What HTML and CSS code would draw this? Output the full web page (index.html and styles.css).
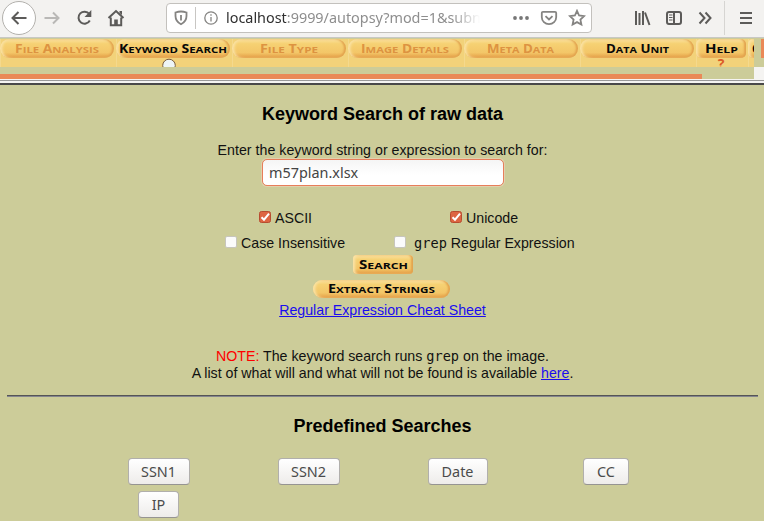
FILE: index.html
```
<!DOCTYPE html>
<html lang="en">
<head>
<meta charset="utf-8">
<title>Autopsy</title>
<link rel="stylesheet" href="styles.css">
</head>
<body>
<header class="toolbar">
  <span class="back"><svg width="18" height="18" viewBox="0 0 18 18"><path d="M16.500 9H2.500M8.500 3L2.500 9l6 6"/></svg></span>
  <svg class="forward" width="18" height="18" viewBox="0 0 18 18"><path d="M1.500 9h14M10 3.500l5.500 5.500-5.500 5.500"/></svg>
  <svg class="reload" width="18" height="18" viewBox="0 0 18 18"><path d="M14.300 5A6 6 0 1 0 14.800 11.500"/><path class="solid" d="M16.300 1v7H9.500z"/></svg>
  <svg class="home" width="18" height="18" viewBox="0 0 18 18"><path d="M1.500 9L9 2l7.500 7M3.800 8.500v7.700h10.400V8.500"/><path class="solid" d="M7.200 16v-5.500h3.600V16zM12.500 2H15v4l-2.500-2z"/></svg>
  <div class="address">
    <svg class="shield" width="14" height="16" viewBox="0 0 14 16"><path d="M1.500 2.500Q7 .5 12.500 2.500V6c0 4-2 6.500-5.500 8.300C3.500 12.500 1.500 10 1.500 6z"/><path d="M7 5v5.500"/></svg>
    <span class="divider"></span>
    <svg class="info" width="16" height="16" viewBox="0 0 16 16"><circle cx="8" cy="8" r="6.200"/><path d="M8 7v4.500M8 4.300v1.400"/></svg>
    <span class="url"><b>localhost</b>:9999/autopsy?mod=1&amp;subn</span>
    <svg class="dots" width="18" height="16" viewBox="0 0 18 16"><circle cx="3" cy="8" r="1.900"/><circle cx="9" cy="8" r="1.900"/><circle cx="15" cy="8" r="1.900"/></svg>
    <svg class="pocket" width="18" height="16" viewBox="0 0 18 16"><path d="M3 1.800h12q1.200 0 1.200 1.200v4.200a7.200 7 0 0 1-14.400 0V3Q1.800 1.800 3 1.800zM5.500 6.200L9 9.500l3.500-3.300"/></svg>
    <svg class="star" width="18" height="18" viewBox="0 0 18 18"><path d="M9 1.800l2.100 4.700 5 .6-3.700 3.500 1 5L9 13.100l-4.400 2.500 1-5L1.900 7.100l5-.6z"/></svg>
  </div>
  <svg class="library" width="17" height="16" viewBox="0 0 17 16"><path d="M2 1v14M5.500 3v12M9 1v14M11 2.500L15.500 15"/></svg>
  <svg class="sidebar" width="18" height="16" viewBox="0 0 18 16"><rect x="2" y="2" width="14" height="12" rx="2"/><path d="M9 2v12"/><path class="thin" d="M4 5h3.500M4 7.500h3.500M4 10h3.500"/></svg>
  <svg class="more" width="16" height="16" viewBox="0 0 16 16"><path d="M2.500 2.500L7.500 8l-5 5.500M8.500 2.500L13.500 8l-5 5.500"/></svg>
  <span class="rule"></span>
  <svg class="menu" width="14" height="16" viewBox="0 0 14 16"><path d="M1 3h12M1 8h12M1 13h12"/></svg>
</header>

<div class="frame">
  <nav class="tabs">
    <div class="tab off"><svg class="pill" width="114" height="19"><text x="15" y="13.500" textLength="84" lengthAdjust="spacingAndGlyphs">F<tspan>ILE</tspan> A<tspan>NALYSIS</tspan></text></svg></div>
    <div class="tab"><svg class="pill" width="114" height="19"><text x="3" y="13.500" textLength="108" lengthAdjust="spacingAndGlyphs">K<tspan>EYWORD</tspan> S<tspan>EARCH</tspan></text></svg><svg class="lens" width="16" height="9" viewBox="0 0 16 9"><circle cx="8" cy="7.500" r="6.300"/></svg></div>
    <div class="tab off"><svg class="pill" width="114" height="19"><text x="28" y="13.500" textLength="58" lengthAdjust="spacingAndGlyphs">F<tspan>ILE</tspan> T<tspan>YPE</tspan></text></svg></div>
    <div class="tab off"><svg class="pill" width="114" height="19"><text x="13" y="13.500" textLength="88" lengthAdjust="spacingAndGlyphs">I<tspan>MAGE</tspan> D<tspan>ETAILS</tspan></text></svg></div>
    <div class="tab off"><svg class="pill" width="114" height="19"><text x="23" y="13.500" textLength="67" lengthAdjust="spacingAndGlyphs">M<tspan>ETA</tspan> D<tspan>ATA</tspan></text></svg></div>
    <div class="tab"><svg class="pill" width="114" height="19"><text x="26" y="13.500" textLength="63" lengthAdjust="spacingAndGlyphs">D<tspan>ATA</tspan> U<tspan>NIT</tspan></text></svg></div>
    <div class="tab help"><svg class="pill" width="50" height="19"><text x="9" y="13.500" textLength="33" lengthAdjust="spacingAndGlyphs">H<tspan>ELP</tspan></text></svg><span class="question">?</span></div>
    <div class="tab close"><svg class="pill" width="50" height="19"><text x="4" y="13.500">C<tspan>LOSE</tspan></text></svg></div>
  </nav>
  <div class="vscroll"><span></span></div>
</div>
<div class="hscroll"><span class="track"><span class="thumb"></span></span></div>
<div class="split"></div>

<main>
  <h1 class="t-title">Keyword Search of raw data</h1>
  <p class="prompt">Enter the keyword string or expression to search for:</p>
  <div class="field">m57plan.xlsx</div>
  <div class="checks first">
    <label><svg class="box on" width="14" height="14" viewBox="0 0 14 14"><rect x="1.500" y="1.500" width="11" height="11" rx="2"/><path d="M3.500 7.200l2.500 2.500 5-6"/></svg>ASCII</label>
    <label><svg class="box on" width="14" height="14" viewBox="0 0 14 14"><rect x="1.500" y="1.500" width="11" height="11" rx="2"/><path d="M3.500 7.200l2.500 2.500 5-6"/></svg>Unicode</label>
  </div>
  <div class="checks second">
    <label><span class="box"></span>Case Insensitive</label>
    <label><span class="box"></span><span><code>grep</code> Regular Expression</span></label>
  </div>
  <svg class="pill search" width="60" height="19"><text x="6" y="13.500" textLength="49" lengthAdjust="spacingAndGlyphs">S<tspan>EARCH</tspan></text></svg>
  <svg class="pill extract" width="137" height="18"><text x="15" y="13" textLength="107" lengthAdjust="spacingAndGlyphs">E<tspan>XTRACT</tspan> S<tspan>TRINGS</tspan></text></svg>
  <p class="cheat"><a>Regular Expression Cheat Sheet</a></p>
  <p class="note"><em>NOTE:</em> The keyword search runs <code>grep</code> on the image.</p>
  <p class="list">A list of what will and what will not be found is available <a>here</a>.</p>
  <hr>
  <h1 class="t-pre">Predefined Searches</h1>
  <div class="grid">
    <button class="w62">SSN1</button><button class="w62">SSN2</button><button class="w59">Date</button><button class="w45">CC</button>
    <button class="w40">IP</button>
  </div>
</main>
</body>
</html>
```
FILE: styles.css
```
* { box-sizing: border-box; }
body { margin: 0; width: 764px; height: 521px; overflow: hidden; background: #cccc99; font: 14.2px/17px "Liberation Sans", Arial, sans-serif; color: #111; }
h1, p { margin: 0; white-space: nowrap; }
svg { display: block; flex: none; }

.toolbar { height: 38px; display: flex; align-items: center; background: #f3f2f0; border-bottom: 1px solid #c9c8c4; padding: 0 7px 2px 2px; }
.toolbar svg { fill: none; stroke: #5c5b59; stroke-width: 2; }
.toolbar .solid { fill: #5c5b59; stroke: none; }
.back { width: 34px; height: 34px; border: 1px solid #b3b1ad; border-radius: 50%; background: #fff; display: flex; align-items: center; justify-content: center; flex: none; }
.toolbar .forward { margin-left: 7px; stroke: #b9b8b6; }
.reload { margin-left: 14px; }
.home { margin-left: 14px; }
.address { width: 426px; height: 30px; margin-left: 41px; background: #fff; border: 1px solid #c3c1bd; border-radius: 4px; display: flex; align-items: center; padding-left: 7px; flex: none; }
.toolbar .address svg { stroke: #858482; stroke-width: 1.8; }
.divider { width: 1px; height: 22px; margin: 0 7px; background: #c8c6c3; }
.toolbar .address .info { stroke-width: 1.3; }
.url { width: 262px; flex: none; margin-left: 7px; white-space: nowrap; font: 14.4px/22px "Noto Sans", "Open Sans", sans-serif; color: #8e8e8e; -webkit-mask-image: linear-gradient(90deg, #000 86%, transparent 97%); mask-image: linear-gradient(90deg, #000 86%, transparent 97%); }
.url b { font-weight: 400; color: #303030; }
.toolbar .address .dots { fill: #777; stroke: none; margin-left: 24px; }
.pocket { margin-left: 10px; }
.star { margin-left: 10px; }
.library { margin-left: 42px; }
.sidebar { margin-left: 14px; }
.toolbar .thin { stroke-width: 1; }
.more { margin-left: 14px; }
.rule { width: 1px; height: 34px; margin-left: 11px; background: #d6d5d2; }
.menu { margin-left: 14px; }

.frame { display: flex; height: 29px; padding-top: 1px; }
.tabs { width: 754px; height: 28px; display: flex; gap: 2px; overflow: hidden; background: #f2d27a; }
.tab { width: 114px; flex: none; background: #f2d27a; display: flex; flex-direction: column; align-items: center; box-shadow: inset 1px 0 #f4d98d; }
.pill { border-radius: 10px; background: linear-gradient(#fae1a0, #f6d173 25%, #f3c668 72%, #e39b43); box-shadow: inset 3px 0 3px -1px #fae4a9, inset -2px 0 2px #e2a34e; }
.pill text { font: 700 11.800px "Open Sans", sans-serif; fill: #080808; }
.pill tspan { font-size: 9.600px; }
.off .pill text { fill: #dd9341; }
.tab.help { width: 50px; }
.help .pill, .close .pill { border-radius: 5px; }
.tab.close { width: 50px; }
.lens { margin: 0 8px 0 0; }
.lens circle { fill: #eef5f6; stroke: #775c3f; }
.question { font: 700 14px/14px "Open Sans", sans-serif; color: #dc5a26; margin-top: -1px; }
.vscroll { flex: 1; padding-left: 7px; }
.vscroll span { display: block; height: 19px; background: #ea8957; }
.hscroll { height: 12px; background: #f5f4f2; }
.track { display: block; width: 754px; height: 12px; background: #cccc99; padding-top: 7px; }
.thumb { display: block; width: 702px; height: 5px; background: #ea8957; }
.split { height: 6px; background: linear-gradient(#f5f4f2 1px, #999 1px, #999 2px, #f5f4f2 2px, #f5f4f2 4px, #494949 4px); }

main { display: flex; flex-direction: column; align-items: center; width: 765px; }
h1 { font-size: 18px; line-height: 22px; color: #000; }
.t-title { margin-top: 18px; }
.prompt { margin-top: 17px; letter-spacing: .02px; }
.field { width: 242px; height: 27px; border: 1px solid #e77e5b; border-radius: 5px; background: linear-gradient(#f5f5f5, #fff 60%); box-shadow: 0 0 0 1px #e2d1ad; padding-left: 6px; font: 14.4px/25px "Noto Sans", "Open Sans", sans-serif; color: #444; position: relative; left: .5px; }
.checks { display: flex; align-self: flex-start; white-space: nowrap; }
.checks label { display: flex; align-items: center; }
.first { margin: 24px 0 0 258px; gap: 137px; }
.second { margin: 8px 0 0 225px; gap: 49px; }
.first label { gap: 3px; }
.second label { gap: 4px; }
.second label + label { gap: 8px; margin-top: -1px; }
.box.on { position: relative; top: -2px; }
.box.on rect { fill: #dd6541; stroke: #b74d30; }
.box.on path { fill: none; stroke: #fff; stroke-width: 2; }
span.box { width: 12px; height: 12px; border: 1px solid #c7c5bd; border-radius: 2px; background: #fbfbfb; margin-top: -3px; }
code { font: 13.600px/16px "DejaVu Sans Mono", monospace; }
.search { margin-top: 3px; border-radius: 4px; }
.extract { margin: 6px 2px 0 0; }
a { color: #1a0dee; text-decoration: underline; }
.cheat { margin-top: 4px; }
.note { margin-top: 29px; }
.note em { color: #f00; font-style: normal; }
hr { width: 751px; height: 2px; margin: 13px 0 0; border: 0; background: linear-gradient(#555 1px, #85858f 1px); }
.t-pre { margin-top: 18px; }
.grid { display: grid; grid-template-columns: 150px 150px 148px 149px; width: 597px; margin: 21px 1px 0 0; row-gap: 6px; justify-items: center; }
button { height: 27px; padding: 0; border: 1px solid #b1afac; border-bottom-color: #969492; border-radius: 4px; background: linear-gradient(#fff, #eeecea); font: 14.4px/24px "Noto Sans", "Open Sans", sans-serif; color: #4b4b4b; }
.w62 { width: 62px; }
.w59 { width: 60px; }
.w45 { width: 46px; }
.w40 { width: 41px; }
```
